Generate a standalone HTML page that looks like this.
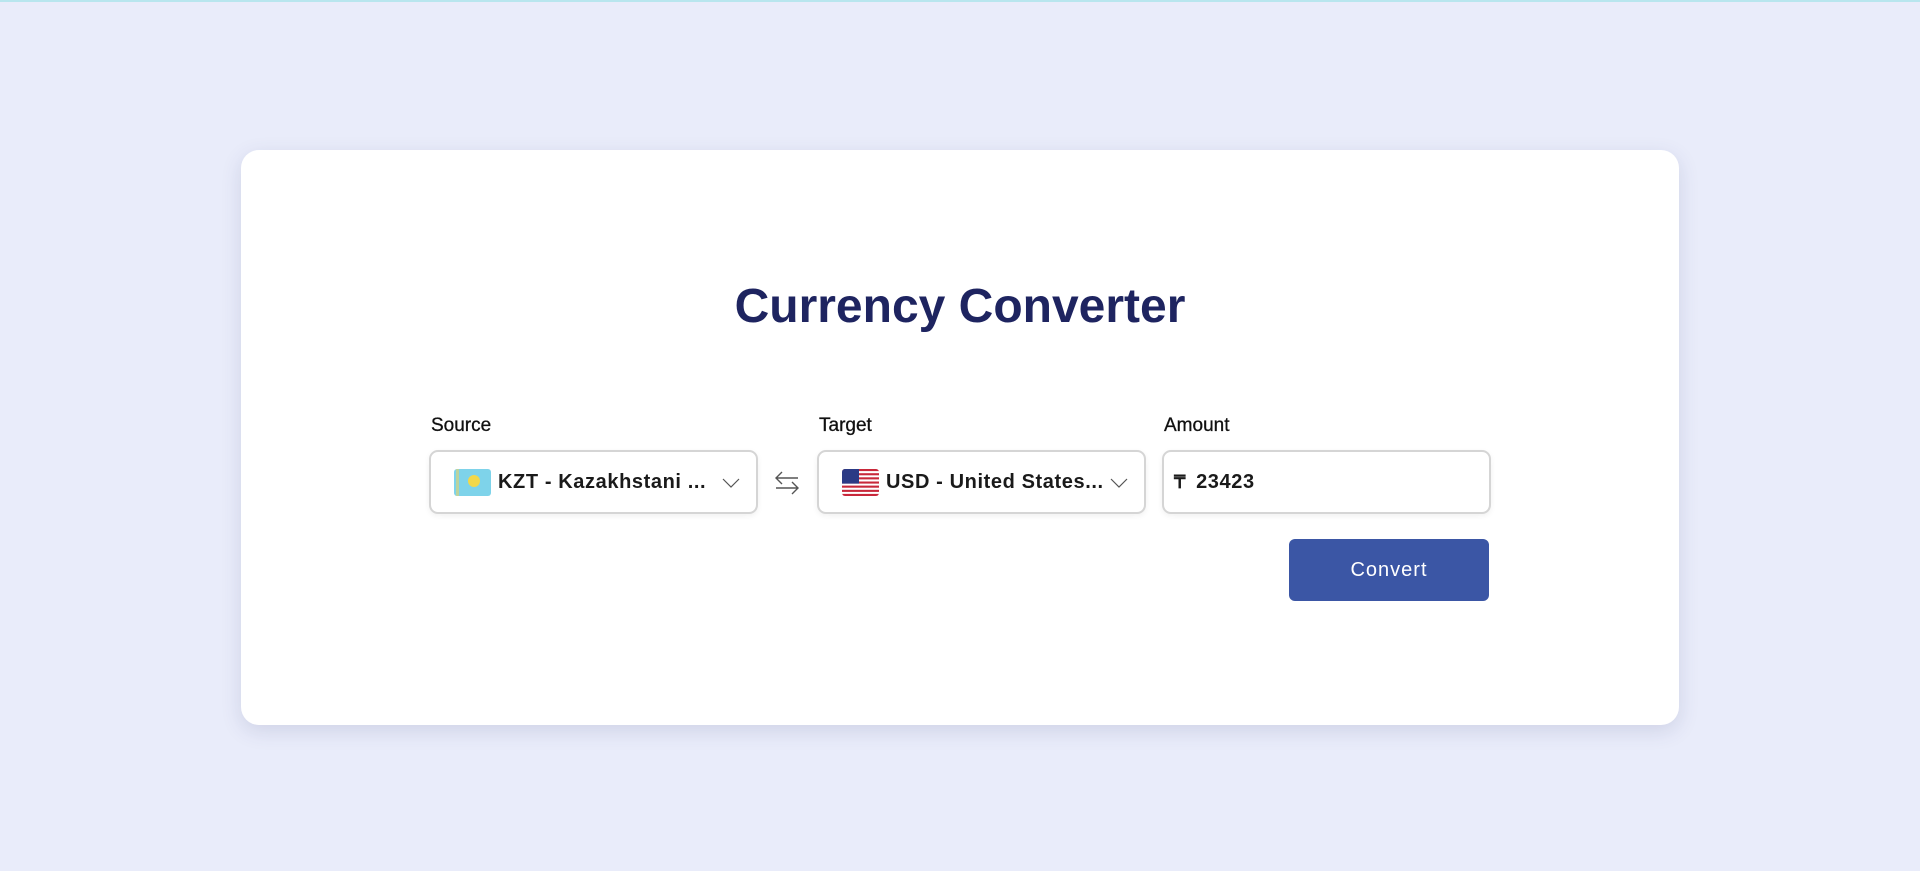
<!DOCTYPE html>
<html><head><style>
*{box-sizing:border-box;margin:0;padding:0}
body{width:1920px;height:871px;background:#e9ecfa;font-family:"Liberation Sans",sans-serif;position:relative;overflow:hidden;border-top:2px solid #b8e6ee}
.card{position:absolute;left:241px;top:148px;width:1438px;height:575px;background:#fff;border-radius:18px;box-shadow:0 6px 20px rgba(60,70,120,.15)}
h1{position:absolute;left:0;right:0;top:277px;text-align:center;font-size:48px;font-weight:bold;color:#1e2460}
.lbl{position:absolute;top:413px;font-size:19px;color:#111;-webkit-text-stroke:0.3px #111}
.box{position:absolute;top:448px;height:64px;border:2px solid #d5d5d5;border-radius:9px;background:#fff;box-shadow:0 2px 6px rgba(0,0,0,.06);font-size:20px;letter-spacing:0.6px;font-weight:bold;color:#1a1a1a;display:flex;align-items:center}
.flag{width:37px;height:27px;margin-left:23px;margin-right:7px;border-radius:3px;overflow:hidden}
.chev{position:absolute;right:16px;top:22px}
.btn{position:absolute;left:1289px;top:537px;width:200px;height:62px;background:#3b56a5;border-radius:6px;color:#fff;font-size:20px;letter-spacing:1px;display:flex;align-items:center;justify-content:center}
</style></head><body>
<div class="card"></div>
<h1>Currency Converter</h1>
<div class="lbl" style="left:431px">Source</div>
<div class="lbl" style="left:819px">Target</div>
<div class="lbl" style="left:1164px">Amount</div>
<div class="box" style="left:429px;width:329px">
<div class="flag" style="background:#7ed3ea;position:relative"><div style="position:absolute;left:2px;top:0;width:3px;height:27px;background:#e4d36a;opacity:.6"></div><div style="position:absolute;left:14px;top:6px;width:12px;height:12px;border-radius:50%;background:#f2d84a"></div></div>
KZT - Kazakhstani ...
<svg class="chev" width="18" height="18" viewBox="0 0 18 18"><path d="M1 5l8 8 8-8" fill="none" stroke="#555" stroke-width="1.2"/></svg></div>
<svg style="position:absolute;left:774px;top:469px" width="26" height="24" viewBox="0 0 26 24"><path d="M24 7H2M8 1L2 7l6 6M2 17h22M18 11l6 6-6 6" fill="none" stroke="#555" stroke-width="1.4"/></svg>
<div class="box" style="left:817px;width:329px">
<svg class="flag" viewBox="0 0 37 27"><rect width="37" height="27" fill="#fff"/><g fill="#c8283a"><rect y="0" width="37" height="2.1"/><rect y="4.2" width="37" height="2.1"/><rect y="8.3" width="37" height="2.1"/><rect y="12.5" width="37" height="2.1"/><rect y="16.6" width="37" height="2.1"/><rect y="20.8" width="37" height="2.1"/><rect y="24.9" width="37" height="2.1"/></g><rect width="17" height="14.6" fill="#2b3a85"/></svg>
USD - United States...
<svg class="chev" width="18" height="18" viewBox="0 0 18 18"><path d="M1 5l8 8 8-8" fill="none" stroke="#555" stroke-width="1.2"/></svg></div>
<div class="box" style="left:1162px;width:329px;padding-left:10px"><span style="font-weight:bold;font-size:18px;margin-right:10px">₸</span>23423</div>
<div class="btn">Convert</div>
</body></html>
